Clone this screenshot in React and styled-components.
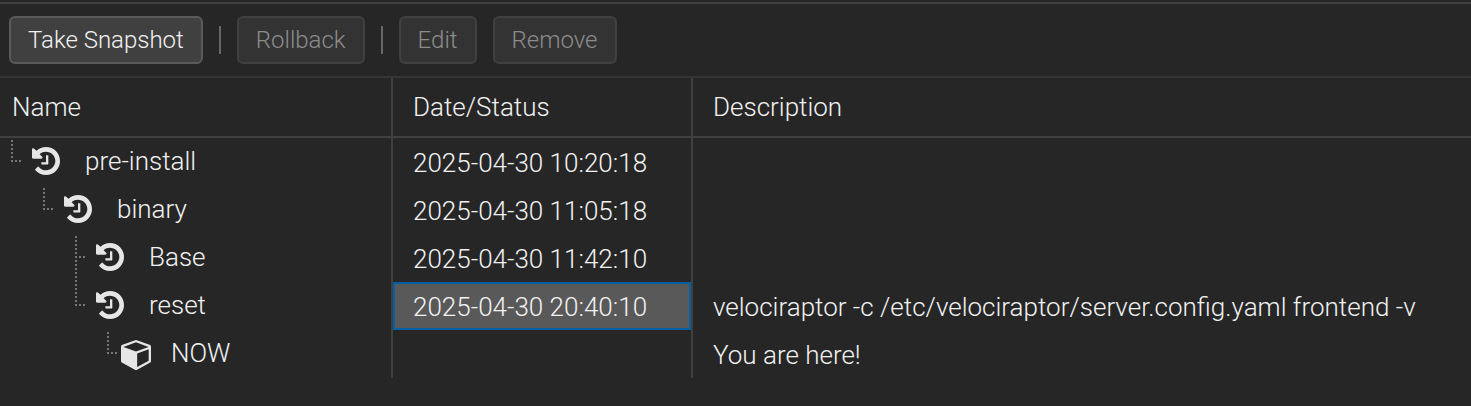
import styled, { createGlobalStyle } from "styled-components";

const snapshots = [
  { name: "pre-install", level: 0, last: true, date: "2025-04-30 10:20:18" },
  { name: "binary", level: 1, last: true, date: "2025-04-30 11:05:18" },
  { name: "Base", level: 2, last: false, date: "2025-04-30 11:42:10" },
  {
    name: "reset",
    level: 2,
    last: true,
    date: "2025-04-30 20:40:10",
    selected: true,
    description:
      "velociraptor -c /etc/velociraptor/server.config.yaml frontend -v",
  },
  {
    name: "NOW",
    level: 3,
    last: true,
    current: true,
    description: "You are here!",
  },
];

const HistoryIcon = () => (
  <svg width="28" height="28" viewBox="0 128 1536 1536" aria-hidden="true">
    <path
      fill="currentColor"
      d="M1536 896q0 156-61 298t-164 245-245 164-298 61q-172 0-327-72.5t-264-204.5q-7-10-6.5-22.5t8.5-20.5l137-138q10-9 25-9 16 2 23 12 73 95 179 147t225 52q104 0 198.500-40.500t163.500-109.500 109.500-163.500 40.500-198.500-40.500-198.500-109.500-163.500-163.500-109.500-198.500-40.500q-98 0-188 35.500t-160 101.500l137 138q31 30 14 69-17 40-59 40h-448q-26 0-45-19t-19-45v-448q0-42 40-59 39-17 69 14l130 129q107-101 244.500-156.500t284.500-55.500q156 0 298 61t245 164 164 245 61 298zm-640-288v448q0 14-9 23t-23 9h-320q-14 0-23-9t-9-23v-64q0-14 9-23t23-9h224v-352q0-14 9-23t23-9h64q14 0 23 9t9 23z"
    />
  </svg>
);

const CubeIcon = () => (
  <svg width="30" height="30" viewBox="64 128 1664 1664" aria-hidden="true">
    <path
      fill="currentColor"
      d="M896 1629l640-349v-636l-640 233v752zm-64-865l698-254-698-254-698 254zm832-252v768q0 35-18 65t-49 47l-704 384q-28 16-61 16t-61-16l-704-384q-31-17-49-47t-18-65v-768q0-40 23-73t61-47l704-256q22-8 44-8t44 8l704 256q38 14 61 47t23 73z"
      transform="translate(64 0)"
    />
  </svg>
);

const Elbow = ({ last }) => (
  <Guide width="22" height="48" viewBox="0 0 22 48" aria-hidden="true">
    <path d={last ? "M12 2V24" : "M12 2V48"} />
    <path d="M15 23H21" />
  </Guide>
);

const App = () => {
  return (
    <Panel>
      <GlobalStyle />
      <Toolbar role="toolbar">
        <Button type="button">Take Snapshot</Button>
        <Separator />
        <Button type="button" disabled>
          Rollback
        </Button>
        <Separator />
        <Button type="button" disabled>
          Edit
        </Button>
        <Button type="button" disabled>
          Remove
        </Button>
      </Toolbar>

      <Table>
        <colgroup>
          <Col $width="393px" />
          <Col $width="300px" />
          <Col />
        </colgroup>
        <thead>
          <tr>
            <Heading scope="col" $first>
              Name
            </Heading>
            <Heading scope="col">Date/Status</Heading>
            <Heading scope="col">Description</Heading>
          </tr>
        </thead>
        <tbody>
          {snapshots.map((snap) => (
            <tr key={snap.name}>
              <NameCell>
                <TreeNode $level={snap.level}>
                  <Elbow last={snap.last} />
                  <NodeIcon $current={snap.current}>
                    {snap.current ? <CubeIcon /> : <HistoryIcon />}
                  </NodeIcon>
                  <NodeText>{snap.name}</NodeText>
                </TreeNode>
              </NameCell>
              <Cell $selected={snap.selected}>{snap.date}</Cell>
              <Cell>{snap.description}</Cell>
            </tr>
          ))}
        </tbody>
      </Table>
    </Panel>
  );
};

export default App;

const GlobalStyle = createGlobalStyle`
  * {
    box-sizing: border-box;
  }
  body {
    margin: 0;
    background: #262626;
    color: #f2f2f2;
    font-family: Roboto, "Liberation Sans", sans-serif;
    font-weight: 300;
    font-size: 26px;
    line-height: 32px;
  }
`;

const Panel = styled.div`
  width: 100%;
  padding-top: 2px;
`;

const Toolbar = styled.div`
  display: flex;
  align-items: center;
  gap: 16px;
  padding: 12px 9px;
  border-top: 2px solid #404040;
  border-bottom: 2px solid #353535;
`;

const Button = styled.button`
  height: 48px;
  padding: 0 17px;
  border: 2px solid #5a5a5a;
  border-radius: 6px;
  background: #404040;
  color: #f2f2f2;
  font: inherit;
  font-size: 24px;
  white-space: nowrap;

  &:disabled {
    border-color: #404040;
    background: #333333;
    color: #8c8c8c;
  }
`;

const Separator = styled.div`
  width: 2px;
  height: 28px;
  background: #666666;
`;

const Table = styled.table`
  width: 100%;
  table-layout: fixed;
  border-collapse: separate;
  border-spacing: 0;
`;

const Col = styled.col`
  width: ${(props) => props.$width || "auto"};
`;

const Heading = styled.th`
  height: 60px;
  padding: 0 0 0 ${(props) => (props.$first ? "12px" : "20px")};
  border-bottom: 2px solid #404040;
  font-weight: 300;
  text-align: left;

  &:not(:last-child) {
    border-right: 2px solid #404040;
  }
`;

const NameCell = styled.td`
  height: 48px;
  padding: 0;
  border-right: 2px solid #404040;
`;

const TreeNode = styled.div`
  display: flex;
  align-items: center;
  height: 48px;
  padding-left: ${(props) => props.$level * 32}px;
`;

const Guide = styled.svg`
  flex: none;

  path {
    fill: none;
    stroke: #777777;
    stroke-width: 2;
    stroke-dasharray: 2 2;
  }
`;

const NodeIcon = styled.span`
  display: flex;
  padding: ${(props) => (props.$current ? "2px 20px 0 3px" : "0 25px 2px 10px")};
  color: #e6e6e6;
`;

const NodeText = styled.span`
  padding-bottom: 2px;
`;

const Cell = styled.td`
  height: 48px;
  padding: 2px 0 0 20px;
  white-space: nowrap;

  &:not(:last-child) {
    border-right: 2px solid #404040;
  }

  ${(props) =>
    props.$selected &&
    `
    background: #595959;
    background-clip: padding-box;
    box-shadow: inset 0 0 0 2px #0060a4;
  `}
`;
